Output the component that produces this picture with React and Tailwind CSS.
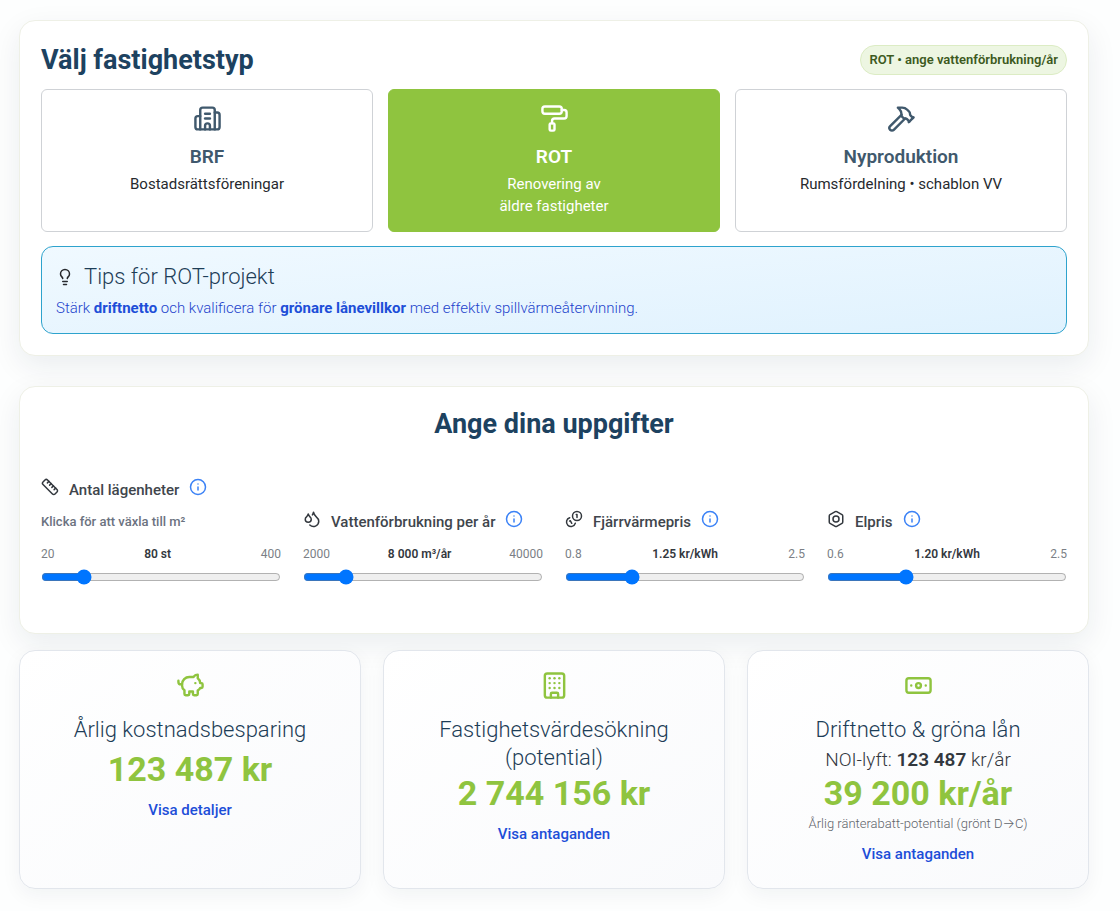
import { useState } from 'react';
import {
  Banknote,
  Bolt,
  Building,
  Building2,
  Droplets,
  Hammer,
  Info,
  Lightbulb,
  PaintRoller,
  PiggyBank,
  Ruler
} from 'lucide-react';

function CoinsIcon({ size = 24, className }) {
  return (
    <svg
      width={size}
      height={size}
      viewBox="0 0 24 24"
      fill="none"
      stroke="currentColor"
      strokeWidth="2"
      strokeLinecap="round"
      strokeLinejoin="round"
      className={className}
      aria-hidden="true"
    >
      <path d="M13.744 17.736a6 6 0 1 1-7.48-7.48" />
      <path d="M15 6h1v4" />
      <path d="m6.134 14.768.866-.5 2 3.464" />
      <circle cx="16" cy="8" r="6" />
    </svg>
  );
}

const propertyTypes = [
  { id: 'brf', title: 'BRF', lines: ['Bostadsrättsföreningar'], icon: Building2 },
  { id: 'rot', title: 'ROT', lines: ['Renovering av', 'äldre fastigheter'], icon: PaintRoller },
  { id: 'ny', title: 'Nyproduktion', lines: ['Rumsfördelning • schablon VV'], icon: Hammer }
];

const groupDigits = (value) => String(value).replace(/\B(?=(\d{3})+$)/g, '\u00a0');

const sliders = [
  {
    id: 'apartments',
    label: 'Antal lägenheter',
    hint: 'Klicka för att växla till m²',
    icon: Ruler,
    min: 20,
    max: 400,
    step: 1,
    start: 80,
    format: (v) => `${v} st`
  },
  {
    id: 'water',
    label: 'Vattenförbrukning per år',
    icon: Droplets,
    min: 2000,
    max: 40000,
    step: 100,
    start: 8000,
    format: (v) => `${groupDigits(v)} m³/år`
  },
  {
    id: 'heat',
    label: 'Fjärrvärmepris',
    icon: CoinsIcon,
    min: 0.8,
    max: 2.5,
    step: 0.01,
    start: 1.25,
    format: (v) => `${v.toFixed(2)} kr/kWh`
  },
  {
    id: 'power',
    label: 'Elpris',
    icon: Bolt,
    min: 0.6,
    max: 2.5,
    step: 0.01,
    start: 1.2,
    format: (v) => `${v.toFixed(2)} kr/kWh`
  }
];

function Panel({ children }) {
  return (
    <section className="rounded-2xl border border-[#eef0e6] bg-white p-[21px] shadow-[0_10px_30px_rgba(15,40,60,0.08)]">
      {children}
    </section>
  );
}

function TypeButton({ type, active, onSelect }) {
  const Icon = type.icon;
  return (
    <button
      type="button"
      aria-pressed={active}
      onClick={onSelect}
      className={`flex h-[143px] flex-col items-center rounded-md border pt-[14px] ${
        active ? 'border-[#8fc43f] bg-[#8fc43f] text-white' : 'border-[#cfd2d6] bg-white text-[#40596d]'
      }`}
    >
      <Icon size={29} />
      <span className="mt-[10px] text-[19px] leading-7 font-semibold">{type.title}</span>
      <span className={`mt-[2px] text-[15px] leading-[22px] ${active ? 'text-white' : 'text-[#26292e]'}`}>
        {type.lines.map((line) => (
          <span key={line} className="block">{line}</span>
        ))}
      </span>
    </button>
  );
}

function SliderField({ field }) {
  const [value, setValue] = useState(field.start);
  const Icon = field.icon;
  return (
    <div>
      <div className="flex h-6 items-start">
        <Icon size={18} className="shrink-0 text-[#33383e]" />
        <label htmlFor={field.id} className="ml-[10px] text-[15px] leading-6 font-medium text-[#40454c]">{field.label}</label>
        <button type="button" aria-label={`Information om ${field.label}`} className="ml-[10px] text-[#3b82f6]">
          <Info size={18} />
        </button>
      </div>
      {field.hint && (
        <button type="button" className="mt-2 block text-[13px] leading-6 font-medium text-[#6b7280]">{field.hint}</button>
      )}
      <div className="mt-3 flex justify-between text-xs leading-4 text-[#7b7f86]">
        <span>{field.min}</span>
        <span className="font-semibold text-[#33383e]">{field.format(value)}</span>
        <span>{field.max}</span>
      </div>
      <input
        id={field.id}
        type="range"
        min={field.min}
        max={field.max}
        step={field.step}
        value={value}
        onChange={(e) => setValue(Number(e.target.value))}
        className="mt-[7px] block h-4 w-full"
      />
    </div>
  );
}

function ResultCard({ icon: Icon, title, before, amount, note, action }) {
  return (
    <article className="flex min-h-[239px] flex-col items-center rounded-2xl border border-[#e2e6ec] bg-linear-to-br from-white to-[#f9fafc] p-5 text-center shadow-[0_6px_20px_rgba(15,40,60,0.05)]">
      <Icon size={29} className="text-[#8fc43f]" />
      <h3 className="mt-4 min-h-8 max-w-[260px] text-[22px] leading-7 font-light text-[#1d3d57]">{title}</h3>
      {before}
      <p className="text-[34px] leading-[42px] font-bold text-[#8fc43f]">{amount}</p>
      {note && <p className="text-[13px] leading-5 font-light text-[#5f646b]">{note}</p>}
      <button type="button" className="mt-2 text-[15px] leading-6 font-medium text-[#1d4ed8]">{action}</button>
    </article>
  );
}

export default function App() {
  const [selected, setSelected] = useState('rot');

  return (
    <main className="min-h-screen bg-[#fdfefe] pt-5 pr-[31px] pb-5 pl-[19px] font-['Roboto','Inter',sans-serif]">
      <Panel>
        <div className="flex h-9 items-center justify-between">
          <h2 className="text-[27px] leading-8 font-bold text-[#1d4260]">Välj fastighetstyp</h2>
          <span className="rounded-full border border-[#dcecc4] bg-[#edf6e2] px-2 text-[13px] leading-7 font-semibold text-[#3d5a1e]">
            ROT • ange vattenförbrukning/år
          </span>
        </div>

        <div className="mt-[11px] grid grid-cols-3 gap-[15px]">
          {propertyTypes.map((type) => (
            <TypeButton
              key={type.id}
              type={type}
              active={selected === type.id}
              onSelect={() => setSelected(type.id)}
            />
          ))}
        </div>

        <div className="mt-[14px] rounded-xl border border-[#2ea3cd] bg-linear-to-br from-[#f0f9ff] to-[#e0f2fe] p-[14px]">
          <h3 className="flex h-8 items-center gap-[10px] text-[22px] leading-8 font-light text-[#1d3d57]">
            <Lightbulb size={18} className="text-[#26292e]" />
            Tips för ROT-projekt
          </h3>
          <p className="mt-1 text-[15px] leading-[22px] font-light text-[#1d43cc]">
            Stärk <strong className="font-bold text-[#1d4ed8]">driftnetto</strong> och kvalificera för{' '}
            <strong className="font-bold text-[#1d4ed8]">grönare lånevillkor</strong> med effektiv spillvärmeåtervinning.
          </p>
        </div>
      </Panel>

      <div className="mt-[30px]">
        <Panel>
          <h2 className="text-center text-[27px] leading-8 font-bold text-[#1d4260]">Ange dina uppgifter</h2>
          <div className="mt-[38px] grid grid-cols-4 items-end gap-[22px] pb-[27px]">
            {sliders.map((field) => (
              <SliderField key={field.id} field={field} />
            ))}
          </div>
        </Panel>
      </div>

      <div className="mt-4 grid grid-cols-3 gap-[22px]">
        <ResultCard icon={PiggyBank} title="Årlig kostnadsbesparing" amount={`${groupDigits(123487)} kr`} action="Visa detaljer" />
        <ResultCard
          icon={Building}
          title="Fastighetsvärdesökning (potential)"
          amount={`${groupDigits(2744156)} kr`}
          action="Visa antaganden"
        />
        <ResultCard
          icon={Banknote}
          title="Driftnetto & gröna lån"
          before={
            <p className="text-[19px] leading-6 font-light text-[#33383e]">
              NOI-lyft: <strong className="font-semibold">{groupDigits(123487)}</strong> kr/år
            </p>
          }
          amount={`${groupDigits(39200)} kr/år`}
          note="Årlig ränterabatt-potential (grönt D→C)"
          action="Visa antaganden"
        />
      </div>
    </main>
  );
}
